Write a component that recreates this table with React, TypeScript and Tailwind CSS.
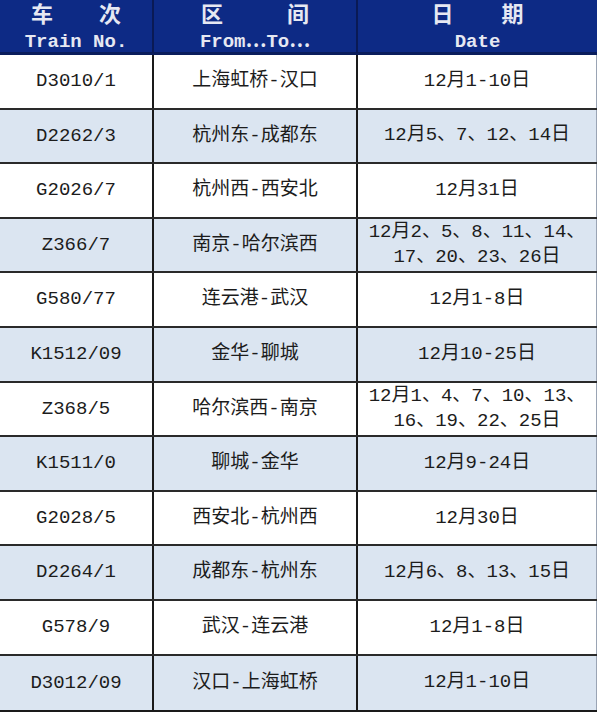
import React from 'react';

type Row = { no: string; route: string; date: string[] };

const rows: Row[] = [
  { no: 'D3010/1', route: '上海虹桥-汉口', date: ['12月1-10日'] },
  { no: 'D2262/3', route: '杭州东-成都东', date: ['12月5、7、12、14日'] },
  { no: 'G2026/7', route: '杭州西-西安北', date: ['12月31日'] },
  { no: 'Z366/7', route: '南京-哈尔滨西', date: ['12月2、5、8、11、14、', '17、20、23、26日'] },
  { no: 'G580/77', route: '连云港-武汉', date: ['12月1-8日'] },
  { no: 'K1512/09', route: '金华-聊城', date: ['12月10-25日'] },
  { no: 'Z368/5', route: '哈尔滨西-南京', date: ['12月1、4、7、10、13、', '16、19、22、25日'] },
  { no: 'K1511/0', route: '聊城-金华', date: ['12月9-24日'] },
  { no: 'G2028/5', route: '西安北-杭州西', date: ['12月30日'] },
  { no: 'D2264/1', route: '成都东-杭州东', date: ['12月6、8、13、15日'] },
  { no: 'G578/9', route: '武汉-连云港', date: ['12月1-8日'] },
  { no: 'D3012/09', route: '汉口-上海虹桥', date: ['12月1-10日'] },
];

const font = { fontFamily: "'Liberation Mono', 'Noto Sans CJK SC', monospace" };

const HeadCell: React.FC<{ zh: [string, string]; gap: string; en: string; border?: boolean }> = ({ zh, gap, en, border }) => (
  <div className={`flex flex-col items-center pt-[4px] ${border ? 'border-r-2 border-[#0a1a55]' : ''}`}>
    <div className={`flex ${gap} text-[22px] font-bold leading-[26px]`}>
      <span>{zh[0]}</span>
      <span>{zh[1]}</span>
    </div>
    <div className="text-[19px] font-bold leading-[22px] mt-[1px]">{en}</div>
  </div>
);

const App: React.FC = () => {
  return (
    <div className="w-[600px] h-[714px] bg-white overflow-hidden" style={font}>
      <div className="w-[597px] border-b-2 border-[#1a1a1a]">
        {/* header */}
        <div className="grid grid-cols-[154px_204px_239px] h-[55px] bg-[#0d2a85] text-[#e6e8f2] border-b-[3px] border-[#0a1d5c]">
          <HeadCell zh={['车', '次']} gap="gap-[46px]" en="Train No." border />
          <HeadCell zh={['区', '间']} gap="gap-[64px]" en="From⋯To⋯" border />
          <HeadCell zh={['日', '期']} gap="gap-[48px]" en="Date" />
        </div>

        {/* rows */}
        {rows.map((r, i) => (
          <div
            key={r.no}
            className={`grid grid-cols-[154px_204px_239px] h-[54.6px] text-[#1c1c1c] text-[19px] ${
              i % 2 === 1 ? 'bg-[#dbe5f1]' : 'bg-white'
            } ${i < rows.length - 1 ? 'border-b-2 border-[#2a2a2a]' : ''}`}
          >
            <div className="flex items-center justify-center border-r-2 border-[#1a1a1a]">{r.no}</div>
            <div className="flex items-center justify-center border-r-2 border-[#1a1a1a]">{r.route}</div>
            <div className="flex flex-col items-center justify-center leading-[25px] border-r border-[#9aa4b4]">
              {r.date.map((d) => (
                <span key={d}>{d}</span>
              ))}
            </div>
          </div>
        ))}
      </div>
    </div>
  );
};

export default App;
